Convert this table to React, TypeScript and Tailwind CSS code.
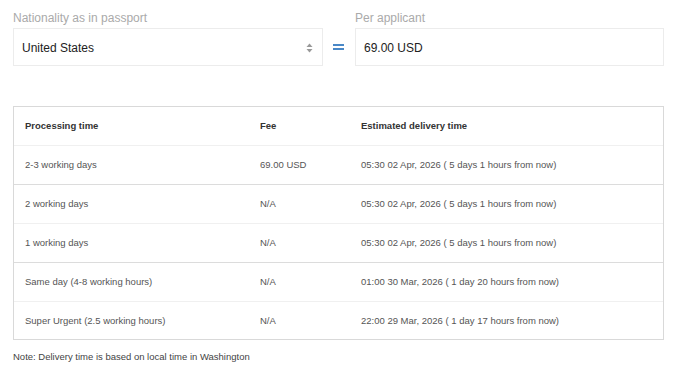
import React from 'react'

const rows = [
  { time: '2-3 working days', fee: '69.00 USD', eta: '05:30 02 Apr, 2026 ( 5 days 1 hours from now)' },
  { time: '2 working days', fee: 'N/A', eta: '05:30 02 Apr, 2026 ( 5 days 1 hours from now)' },
  { time: '1 working days', fee: 'N/A', eta: '05:30 02 Apr, 2026 ( 5 days 1 hours from now)' },
  { time: 'Same day (4-8 working hours)', fee: 'N/A', eta: '01:00 30 Mar, 2026 ( 1 day 20 hours from now)' },
  { time: 'Super Urgent (2.5 working hours)', fee: 'N/A', eta: '22:00 29 Mar, 2026 ( 1 day 17 hours from now)' },
]

export default function App() {
  return (
    <div className="w-[700px] h-[378px] bg-white pl-[13px] pr-[36px] pt-[10px] font-['Liberation_Sans',Arial,sans-serif]">
      {/* 국적 / 수수료 */}
      <div className="flex items-end">
        <div className="w-[310px]">
          <div className="text-[12px] leading-[16px] text-[#aaaaaa] mb-[2px]">Nationality as in passport</div>
          <div className="h-[38px] border border-[#ececec] flex items-center pt-[1px] pl-[8px] pr-[9px] text-[12px] text-[#222]">
            <span className="flex-1">United States</span>
            <svg width="7" height="10" viewBox="0 0 7 10" className="text-[#999]">
              <path d="M3.5 0.5 L6.5 4 H0.5 Z" fill="currentColor" />
              <path d="M3.5 9.5 L6.5 6 H0.5 Z" fill="currentColor" />
            </svg>
          </div>
        </div>
        <div className="w-[32px] h-[38px] flex items-center justify-center">
          <div className="flex flex-col gap-[2px] -ml-[2px]">
            <div className="w-[11px] h-[2px] bg-[#4a88c7]" />
            <div className="w-[11px] h-[2px] bg-[#4a88c7]" />
          </div>
        </div>
        <div className="flex-1">
          <div className="text-[12px] leading-[16px] text-[#aaaaaa] mb-[2px]">Per applicant</div>
          <div className="h-[38px] border border-[#ececec] flex items-center pt-[1px] pl-[8px] text-[12px] text-[#222]">
            69.00 USD
          </div>
        </div>
      </div>

      {/* 처리 시간 표 */}
      <div className="mt-[40px] border border-[#d9d9d9] text-[9.5px]">
        <div className="flex h-[38px] items-center font-bold text-[#333]">
          <div className="w-[235px] pl-[11px]">Processing time</div>
          <div className="w-[101px] pl-[11px]">Fee</div>
          <div className="flex-1 pl-[11px]">Estimated delivery time</div>
        </div>
        {rows.map((r, i) => (
          <div
            key={i}
            className={`flex items-center pt-[1px] text-[#555] border-t ${i === 1 || i === 3 ? 'border-[#dcdcdc]' : 'border-[#f0f0f0]'} ${i === 4 ? 'h-[38px]' : 'h-[39px]'}`}
          >
            <div className="w-[235px] pl-[11px]">{r.time}</div>
            <div className="w-[101px] pl-[11px]">{r.fee}</div>
            <div className="flex-1 pl-[11px]">{r.eta}</div>
          </div>
        ))}
      </div>

      <div className="mt-[10px] text-[9.5px] text-[#444]">Note: Delivery time is based on local time in Washington</div>
    </div>
  )
}
